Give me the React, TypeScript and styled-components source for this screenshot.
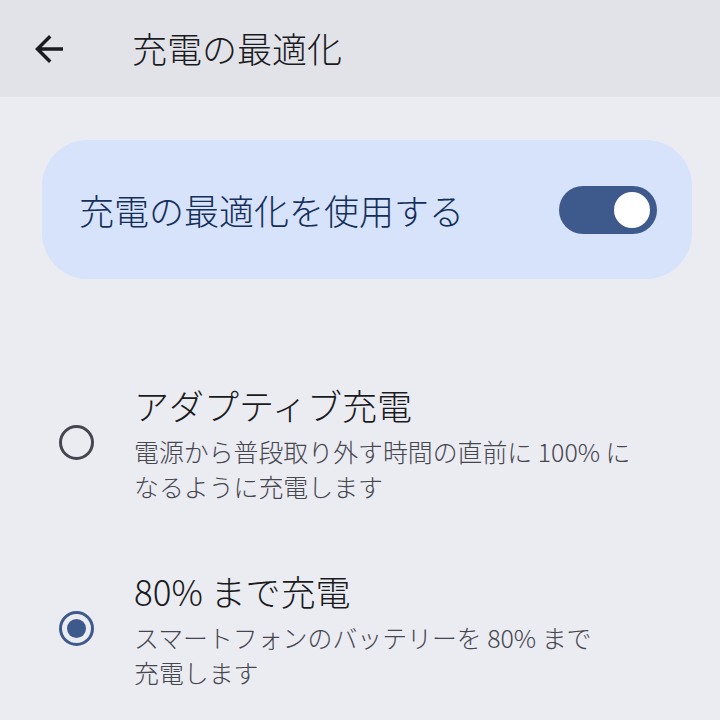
import React, { useState } from "react";
import styled, { createGlobalStyle } from "styled-components";

const GlobalStyle = createGlobalStyle`
  html, body {
    margin: 0;
    padding: 0;
    background: #ebebf2;
  }
  body {
    font-family: "Noto Sans CJK JP", "Noto Sans", Roboto, sans-serif;
    -webkit-font-smoothing: antialiased;
  }
`;

const Page = styled.div`
  width: 720px;
  height: 720px;
  background: #ebebf2;
  overflow: hidden;
  display: flex;
  flex-direction: column;
`;

const Header = styled.header`
  height: 97px;
  background: #e2e2e9;
  display: flex;
  align-items: center;
  padding-left: 28px;
  gap: 62px;
  flex-shrink: 0;
`;

const BackButton = styled.button`
  width: 42px;
  height: 42px;
  padding: 0;
  border: none;
  background: transparent;
  display: flex;
  align-items: center;
  justify-content: center;
  color: #1a1b20;
`;

const Title = styled.h1`
  margin: 0 0 3px;
  font-size: 35px;
  font-weight: 300;
  color: #1a1b20;
  line-height: 1;
`;

const Content = styled.main`
  padding: 43px 28px 0 42px;
  display: flex;
  flex-direction: column;
`;

const MainSwitchCard = styled.div`
  height: 139px;
  border-radius: 46px;
  background: #d7e2fb;
  display: flex;
  align-items: center;
  justify-content: space-between;
  padding: 0 35px 0 37px;
  box-sizing: border-box;
`;

const CardLabel = styled.span`
  font-size: 35px;
  font-weight: 300;
  color: #142f5a;
  line-height: 1;
`;

const Track = styled.button<{ $on: boolean }>`
  width: 98px;
  height: 48px;
  border-radius: 24px;
  border: none;
  padding: 0 7px;
  background: ${(p) => (p.$on ? "#3e5a8c" : "#74777f")};
  display: flex;
  align-items: center;
  justify-content: ${(p) => (p.$on ? "flex-end" : "flex-start")};
  box-sizing: border-box;
`;

const Thumb = styled.span`
  width: 36px;
  height: 36px;
  border-radius: 50%;
  background: #ffffff;
`;

const OptionList = styled.div`
  display: flex;
  flex-direction: column;
  gap: 62px;
  margin-top: 101px;
  margin-left: -25px;
`;

const Option = styled.div`
  display: flex;
  align-items: center;
  gap: 40px;
  padding-left: 42px;
`;

const Radio = styled.span<{ $checked: boolean }>`
  width: 35px;
  height: 35px;
  border-radius: 50%;
  border: 3.5px solid ${(p) => (p.$checked ? "#3e5a8c" : "#45464e")};
  box-sizing: border-box;
  display: flex;
  align-items: center;
  justify-content: center;
  flex-shrink: 0;
  &::after {
    content: "";
    display: ${(p) => (p.$checked ? "block" : "none")};
    width: 19px;
    height: 19px;
    border-radius: 50%;
    background: #3e5a8c;
  }
`;

const OptionText = styled.div`
  display: flex;
  flex-direction: column;
`;

const OptionTitle = styled.div`
  font-size: 35px;
  font-weight: 300;
  line-height: 50px;
  color: #1a1b20;
`;

const OptionSummary = styled.div`
  margin-top: 4px;
  font-size: 24.9px;
  font-weight: 300;
  line-height: 35px;
  color: #45464e;
  width: 520px;
`;

const options = [
  {
    title: "アダプティブ充電",
    summary: "電源から普段取り外す時間の直前に 100% に",
    summary2: "なるように充電します",
  },
  {
    title: "80% まで充電",
    summary: "スマートフォンのバッテリーを 80% まで",
    summary2: "充電します",
  },
];

export default function App() {
  const [on, setOn] = useState(true);
  const [selected, setSelected] = useState(1);
  return (
    <Page>
      <GlobalStyle />
      <Header>
        <BackButton aria-label="戻る">
          <svg width="42" height="42" viewBox="0 0 24 24" fill="currentColor">
            <path d="M20 11H7.83l5.59-5.59L12 4l-8 8 8 8 1.41-1.41L7.83 13H20v-2z" />
          </svg>
        </BackButton>
        <Title>充電の最適化</Title>
      </Header>
      <Content>
        <MainSwitchCard>
          <CardLabel>充電の最適化を使用する</CardLabel>
          <Track $on={on} onClick={() => setOn(!on)}>
            <Thumb />
          </Track>
        </MainSwitchCard>
        <OptionList>
          {options.map((o, i) => (
            <Option key={i} onClick={() => setSelected(i)}>
              <Radio $checked={selected === i} />
              <OptionText>
                <OptionTitle>{o.title}</OptionTitle>
                <OptionSummary>
                  {o.summary}
                  <br />
                  {o.summary2}
                </OptionSummary>
              </OptionText>
            </Option>
          ))}
        </OptionList>
      </Content>
    </Page>
  );
}
